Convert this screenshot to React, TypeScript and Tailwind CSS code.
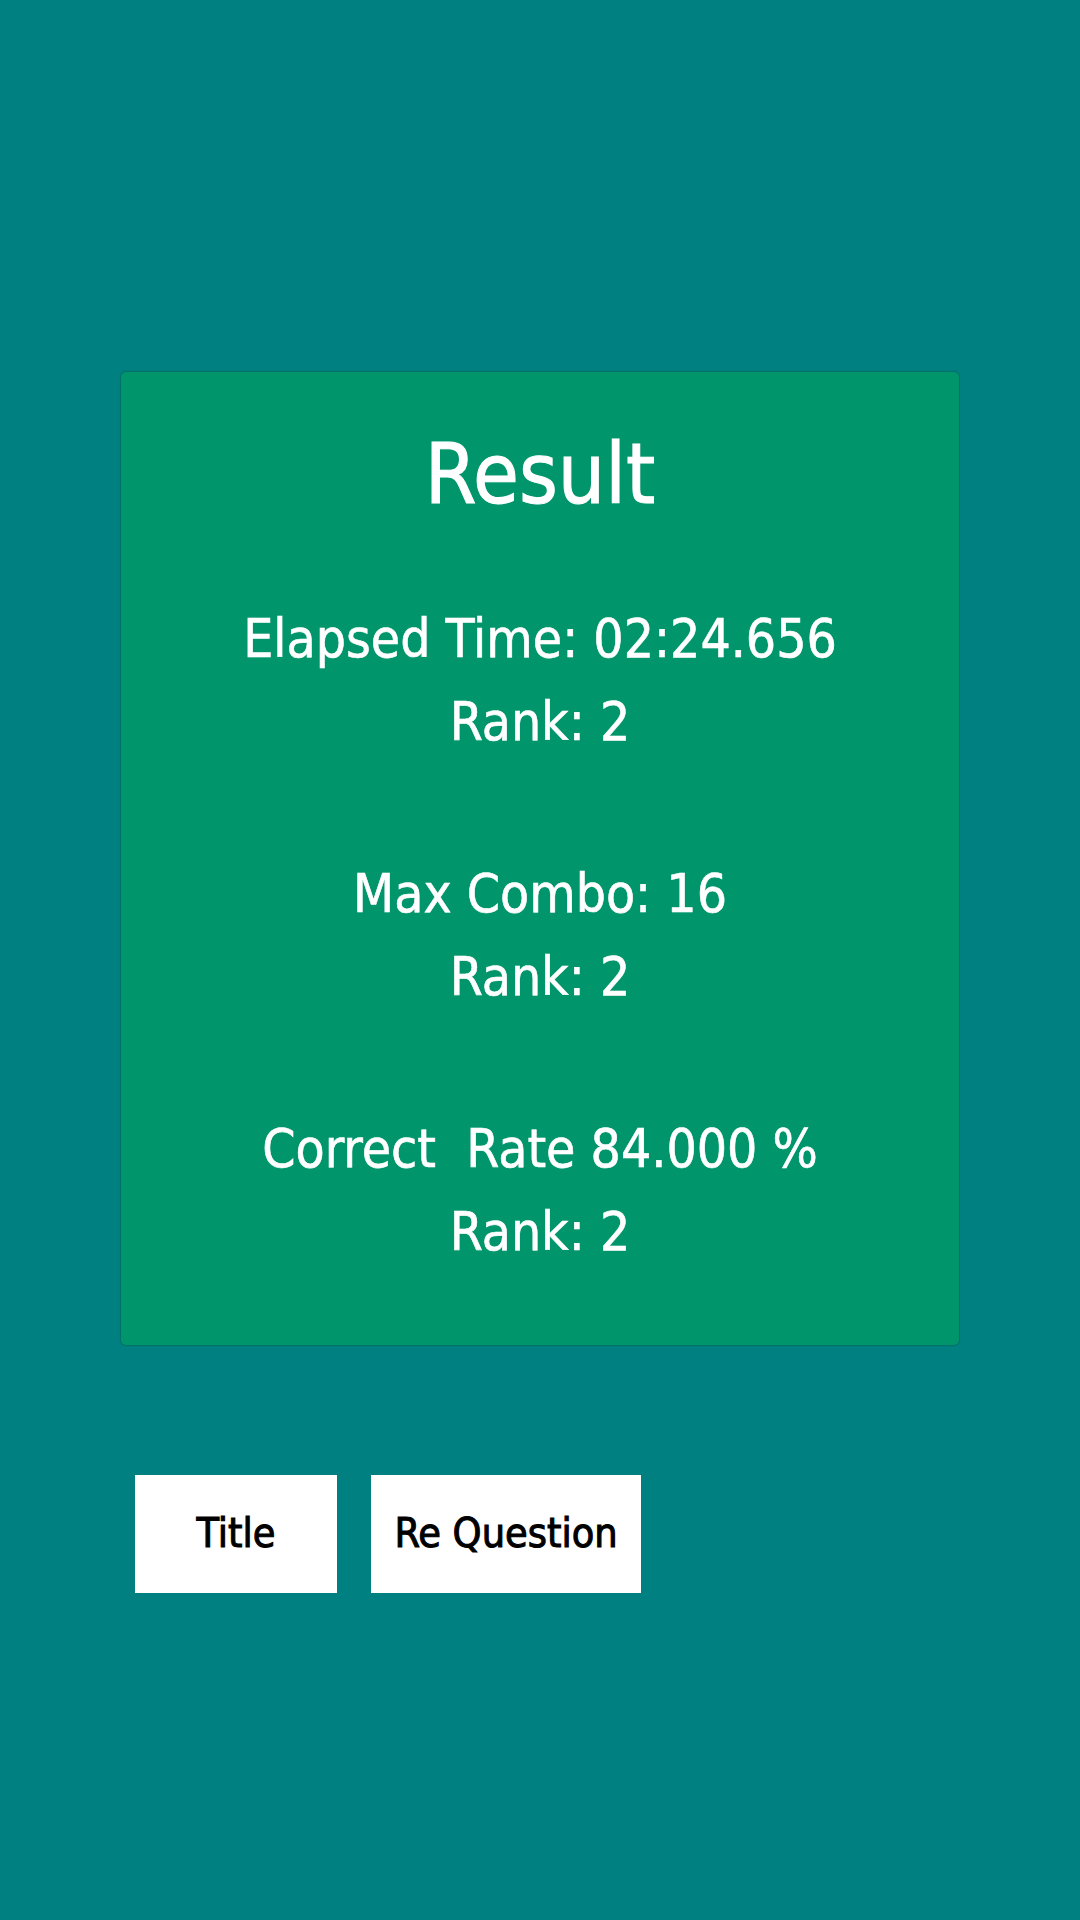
const stats = [
  { label: "Elapsed Time: 02:24.656", rank: 2 },
  { label: "Max Combo: 16", rank: 2 },
  { label: "Correct  Rate 84.000 %", rank: 2 },
];

const font = "font-['Liberation_Sans_Narrow','DejaVu_Sans_Condensed',sans-serif]";

export default function App() {
  return (
    <div className={`min-h-[1920px] w-[1080px] bg-[#008080] pt-[372px] ${font}`}>
      <div className="mx-[121px] flex w-[838px] flex-col items-center rounded-[5px] bg-[#01956b] pt-[51px] pb-[72px] text-white shadow-[0_0_1px_1px_rgba(0,80,60,0.35)]">
        <h1 className="text-[83px] leading-[104px] [-webkit-text-stroke:1px_white]">Result</h1>
        <div className="mt-[70px] flex flex-col gap-[89px]">
          {stats.map((s) => (
            <div key={s.label} className="flex flex-col items-center text-[53px] leading-[83px] [-webkit-text-stroke:0.6px_white]">
              <div className="whitespace-pre">{s.label}</div>
              <div>Rank: {s.rank}</div>
            </div>
          ))}
        </div>
      </div>

      <div className="mt-[130px] flex gap-[34px] pl-[135px]">
        <button className="flex h-[118px] w-[202px] items-center justify-center bg-white text-[41px] text-black [-webkit-text-stroke:1px_black]">
          Title
        </button>
        <button className="flex h-[118px] w-[270px] items-center justify-center bg-white text-[41px] text-black [-webkit-text-stroke:1px_black]">
          Re Question
        </button>
      </div>
    </div>
  );
}
